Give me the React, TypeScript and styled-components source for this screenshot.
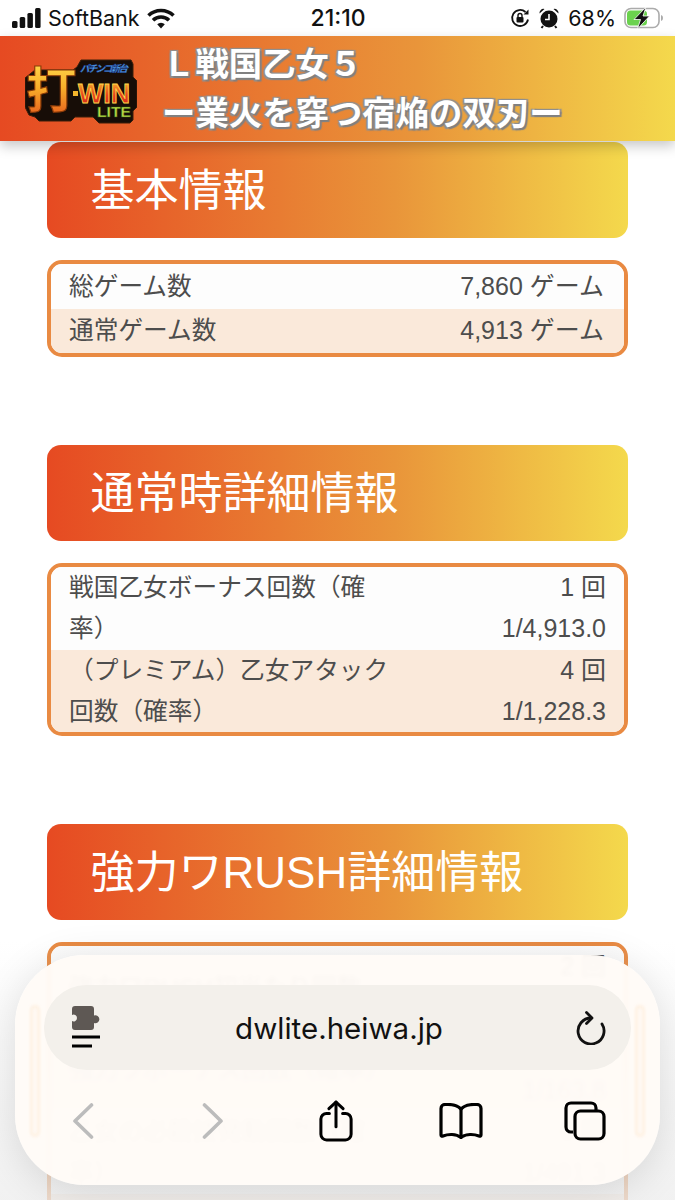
import React from 'react';
import styled, { createGlobalStyle } from 'styled-components';

const GlobalStyle = createGlobalStyle`
  html, body {
    margin: 0;
    padding: 0;
    background: #fff;
  }
  * {
    box-sizing: border-box;
  }
`;

const Page = styled.div`
  position: relative;
  width: 675px;
  height: 1200px;
  overflow: hidden;
  background: #fff;
  font-family: "Liberation Sans", "Noto Sans CJK JP", sans-serif;
`;

const StatusBar = styled.div`
  display: grid;
  grid-template-columns: 1fr auto 1fr;
  align-items: center;
  height: 36px;
  padding: 0 11px 0 12px;
  font-family: Inter, "Liberation Sans", sans-serif;
  font-size: 21.5px;
  color: #111;
`;

const StatusLeft = styled.div`
  display: flex;
  align-items: center;
  gap: 7px;
`;

const StatusRight = styled.div`
  display: flex;
  align-items: center;
  justify-content: flex-end;
  gap: 8px;
`;

const Clock = styled.div`
  font-size: 23px;
  font-weight: 500;
`;

const Header = styled.header`
  position: relative;
  z-index: 2;
  display: flex;
  align-items: center;
  height: 105px;
  padding-left: 25px;
  gap: 25px;
  background: linear-gradient(90deg, #e64a22 0%, #e9953a 62%, #f4d94c 100%);
  box-shadow: 0 5px 12px rgba(0, 0, 0, 0.22);
`;

const HeaderTitle = styled.h1`
  margin: 0;
  font-size: 33.4px;
  line-height: 49px;
  font-weight: 700;
  color: #fff;
  white-space: nowrap;
  text-shadow: 2px 2px 1px #808080, -1.5px -1.5px 1px #909090, 2px -1.5px 1px #909090, -1.5px 2px 1px #909090;
`;

const Content = styled.main`
  padding: 1px 47px 0;
`;

const Section = styled.section`
  margin-bottom: 88px;
`;

const SectionTitle = styled.h2`
  display: flex;
  align-items: center;
  height: 96px;
  margin: 0 0 22px;
  padding: 0 0 7px 43.5px;
  border-radius: 14px;
  font-size: 44px;
  font-weight: 400;
  color: #fff;
  background: linear-gradient(90deg, #e64a22 0%, #e9953a 60%, #f4d94c 100%);
`;

const Table = styled.div`
  border: 4px solid #e98a42;
  border-radius: 15px;
  overflow: hidden;
`;

const Row = styled.div<{ $alt?: boolean }>`
  display: grid;
  grid-template-columns: 325px 1fr;
  align-items: center;
  min-height: 44.5px;
  padding: 0 18px;
  font-size: 24.7px;
  line-height: 41.25px;
  color: #4d4d4d;
  background: ${props => (props.$alt ? '#fae9da' : '#fdfdfd')};
`;

const Value = styled.div<{ $inset?: boolean }>`
  text-align: right;
  font-size: 25px;
  margin-right: ${props => (props.$inset ? '2px' : '0')};
`;

const BottomFog = styled.div`
  position: absolute;
  z-index: 2;
  left: 0;
  right: 0;
  top: 940px;
  bottom: 0;
  background: linear-gradient(180deg, rgba(238, 238, 238, 0) 0%, rgba(238, 238, 238, 0.35) 40%, rgba(238, 238, 238, 0.8) 100%);
`;

const Sheet = styled.div`
  position: absolute;
  z-index: 3;
  left: 15px;
  top: 955px;
  width: 645px;
  height: 230px;
  padding: 30px 29px 0;
  border-radius: 70px;
  background: rgba(255, 251, 247, 0.965);
  box-shadow: 0 6px 40px rgba(0, 0, 0, 0.12);
  backdrop-filter: blur(2px);
`;

const EdgeGlow = styled.div<{ $side: 'left' | 'right' }>`
  position: absolute;
  top: 50px;
  ${props => props.$side}: 15px;
  width: 10px;
  height: 132px;
  border-radius: 6px;
  border: 3px solid rgba(245, 170, 90, 0.14);
  filter: blur(1.5px);
`;

const UrlBar = styled.div`
  display: flex;
  align-items: center;
  justify-content: space-between;
  height: 85px;
  padding: 0 25px 0 28px;
  border-radius: 43px;
  background: #f3f0eb;
`;

const UrlText = styled.div`
  font-family: Inter, "Liberation Sans", sans-serif;
  font-size: 29.5px;
  color: #111;
`;

const Toolbar = styled.div`
  display: grid;
  grid-template-columns: 130px 130px 115px 136px 112px;
  justify-items: center;
  align-items: center;
  height: 102px;
  margin-left: -26px;
`;

const Logo = () => (
  <svg width="112" height="78" viewBox="0 -8 112 78">
    <defs>
      <linearGradient id="gold" x1="0" y1="0" x2="0" y2="1">
        <stop offset="0" stopColor="#ffe75a" />
        <stop offset="0.5" stopColor="#f9b02a" />
        <stop offset="1" stopColor="#e2501b" />
      </linearGradient>
      <linearGradient id="red" x1="0" y1="0" x2="0" y2="1">
        <stop offset="0" stopColor="#f9c52f" />
        <stop offset="0.55" stopColor="#e8401c" />
        <stop offset="1" stopColor="#c9201a" />
      </linearGradient>
    </defs>
    <path
      d="M10 12h38l4-3 4-7h50l2 4v13l4 4v26l-4 4v9l-3 3H74l-6-6H50l-4 4H14l-4-4-6-2-4-8V20z"
      fill="#170d07"
      stroke="#3b1e0a"
      strokeWidth="1"
    />
    <text x="79" y="14" textAnchor="middle" fontSize="9.5" fontWeight="700" fontStyle="italic" fill="#5db2f5" stroke="#1d3f8f" strokeWidth="0.5" fontFamily="'Noto Sans CJK JP', sans-serif" textLength="48">
      パチンコ新台
    </text>
    <text
      transform="translate(1 50) scale(1.15 1.1)"
      fontSize="44"
      fontWeight="700"
      fill="url(#gold)"
      stroke="#8a3a08"
      strokeWidth="1"
      fontFamily="'Noto Sans CJK JP', sans-serif"
    >
      打
    </text>
    <rect x="48" y="33" width="5" height="5" fill="#f4b52c" />
    <text x="53" y="45" fontSize="27" fontWeight="700" fill="url(#red)" stroke="#ffd54a" strokeWidth="0.9" fontFamily="'Liberation Sans', sans-serif" textLength="52" lengthAdjust="spacingAndGlyphs">
      WIN
    </text>
    <text x="72" y="59" fontSize="14.5" fontWeight="700" fill="#c3e04a" stroke="#2b5a12" strokeWidth="0.5" fontFamily="'Liberation Sans', sans-serif" textLength="34" lengthAdjust="spacingAndGlyphs">
      LITE
    </text>
  </svg>
);

const SignalIcon = () => (
  <svg width="29" height="20" viewBox="0 0 29 20" fill="#111">
    <rect x="0" y="13" width="5.500" height="7" rx="1.500" />
    <rect x="7.700" y="9" width="5.500" height="11" rx="1.500" />
    <rect x="15.400" y="5" width="5.500" height="15" rx="1.500" />
    <rect x="23.100" y="0" width="5.500" height="20" rx="1.500" />
  </svg>
);

const WifiIcon = () => (
  <svg width="28" height="21" viewBox="0 0 28 21" fill="none" stroke="#111" strokeWidth="3.6">
    <path d="M1.500 7.500a18 18 0 0 1 25 0" />
    <path d="M6 12.200a11.500 11.500 0 0 1 16 0" />
    <path d="M14 20.500l-3.800-4.200a5.400 5.400 0 0 1 7.600 0z" fill="#111" stroke="none" />
  </svg>
);

const RotationLockIcon = () => (
  <svg width="20" height="20" viewBox="0 0 20 20" fill="none">
    <path d="M18 11.500A8 8 0 1 1 15.500 4" stroke="#111" strokeWidth="1.800" />
    <path d="M18.500 1.500v5h-5z" fill="#111" />
    <rect x="6.500" y="9" width="7" height="5.500" rx="1" fill="#111" />
    <path d="M8 9V7.500a2 2 0 0 1 4 0V9" stroke="#111" strokeWidth="1.400" />
  </svg>
);

const AlarmIcon = () => (
  <svg width="22" height="22" viewBox="0 0 22 22" fill="none">
    <circle cx="11" cy="12" r="8.500" fill="#111" />
    <path d="M1.500 6.500a4 4 0 0 1 5-4.500zM20.500 6.500a4 4 0 0 0-5-4.500z" fill="#111" />
    <path d="M11 7v5.500H7" stroke="#fff" strokeWidth="1.600" />
    <path d="M5 19l-1.500 2M17 19l1.500 2" stroke="#111" strokeWidth="2" />
  </svg>
);

const BatteryIcon = () => (
  <svg width="40" height="22" viewBox="0 0 40 22" fill="none">
    <rect x="1" y="1.500" width="34" height="19" rx="6" stroke="#ababab" strokeWidth="1.600" />
    <rect x="3" y="3.500" width="20" height="15" rx="3.500" fill="#6bd24e" />
    <path d="M37 8v6a3 3 0 0 0 2-3 3 3 0 0 0-2-3z" fill="#ababab" />
    <path d="M22 0L10 12.500h6.500L13.500 22l12-13h-6.500z" fill="#111" stroke="#fff" strokeWidth="0.800" />
  </svg>
);

const PuzzleMenuIcon = () => (
  <svg width="30" height="44" viewBox="0 0 30 44" fill="none">
    <path
      d="M3 0h16a3 3 0 0 1 3 3v6.500a4 4 0 1 1 0 7.500V21a3 3 0 0 1-3 3H3a3 3 0 0 1-3-3v-6a3.400 3.400 0 1 0 0-6V3a3 3 0 0 1 3-3z"
      fill="#5e5854"
    />
    <path d="M0 31h28M0 40h20" stroke="#000" strokeWidth="3.200" />
  </svg>
);

const ReloadIcon = () => (
  <svg width="30" height="34" viewBox="0 0 30 34" fill="none" stroke="#111" strokeWidth="2.800" strokeLinecap="round" strokeLinejoin="round">
    <path d="M15 7a13 13 0 1 0 11 6" />
    <path d="M10.500 1.500L16 7l-5.500 5.500" />
  </svg>
);

const ChevronIcon = ({ dir }: { dir: 'left' | 'right' }) => (
  <svg width="22" height="36" viewBox="0 0 22 36" fill="none" stroke="#bcbcbc" strokeWidth="3.600" strokeLinecap="round" strokeLinejoin="round">
    <path d={dir === 'left' ? 'M19.500 2L3 18l16.500 16' : 'M2.500 2L19 18 2.500 34'} />
  </svg>
);

const ShareIcon = () => (
  <svg width="34" height="42" viewBox="0 0 36 44" fill="none" stroke="#000" strokeWidth="3.200" strokeLinecap="round" strokeLinejoin="round">
    <path d="M11 14H8a6 6 0 0 0-6 6v16a6 6 0 0 0 6 6h20a6 6 0 0 0 6-6V20a6 6 0 0 0-6-6h-3" />
    <path d="M18 28V2" />
    <path d="M10.500 9L18 2l7.500 7" />
  </svg>
);

const BookIcon = () => (
  <svg width="44" height="36" viewBox="0 0 44 36" fill="none" stroke="#000" strokeWidth="3.200" strokeLinecap="round" strokeLinejoin="round">
    <path d="M22 6c-3-3-7-4.500-13-4.500H6a4 4 0 0 0-4 4V32c0 1 .8 1.500 2 1 5-2 13-2.500 18 1.500 5-4 13-3.500 18-1.500 1.200.5 2 0 2-1V5.500a4 4 0 0 0-4-4h-3C29 1.500 25 3 22 6z" />
    <path d="M22 6v28" />
  </svg>
);

const TabsIcon = () => (
  <svg width="42" height="40" viewBox="0 0 42 40" fill="none" stroke="#000" strokeWidth="3.200" strokeLinejoin="round">
    <path d="M9 31H7a5 5 0 0 1-5-5V7a5 5 0 0 1 5-5h20a5 5 0 0 1 5 5v2" />
    <rect x="11" y="10" width="29" height="28" rx="5.500" />
  </svg>
);

const sections = [
  {
    title: '基本情報',
    inset: true,
    rows: [
      { label: '総ゲーム数', value: ['7,860 ゲーム'] },
      { label: '通常ゲーム数', value: ['4,913 ゲーム'] },
    ],
  },
  {
    title: '通常時詳細情報',
    rows: [
      { label: '戦国乙女ボーナス回数（確率）', value: ['1 回', '1/4,913.0'] },
      { label: '（プレミアム）乙女アタック回数（確率）', value: ['4 回', '1/1,228.3'] },
    ],
  },
  {
    title: '強力ワRUSH詳細情報',
    rows: [
      { label: '強力ワRUSH初当たり回数', value: ['2 回', '1/2,456.5'] },
      { label: '強力ワボーナス回数（確率）', value: ['18 回', '1/163.8'] },
      { label: '乙女の必殺技発動回数（確率）', value: ['6 回', '1/491.3'] },
      // the next row is cropped by the bottom of the page
      { label: '', value: [] },
    ],
  },
];

export default function App() {
  return (
    <Page>
      <GlobalStyle />
      <StatusBar>
        <StatusLeft>
          <SignalIcon />
          <span>SoftBank</span>
          <WifiIcon />
        </StatusLeft>
        <Clock>21:10</Clock>
        <StatusRight>
          <RotationLockIcon />
          <AlarmIcon />
          <span>68%</span>
          <BatteryIcon />
        </StatusRight>
      </StatusBar>
      <Header>
        <Logo />
        <HeaderTitle>
          Ｌ戦国乙女５
          <br />
          ー業火を穿つ宿焔の双刃ー
        </HeaderTitle>
      </Header>
      <Content>
        {sections.map(section => (
          <Section key={section.title}>
            <SectionTitle>{section.title}</SectionTitle>
            <Table>
              {section.rows.map((row, i) => (
                <Row key={row.label} $alt={i % 2 === 1}>
                  <div>{row.label}</div>
                  <Value $inset={section.inset}>
                    {row.value.map(line => (
                      <div key={line}>{line}</div>
                    ))}
                  </Value>
                </Row>
              ))}
            </Table>
          </Section>
        ))}
      </Content>
      <BottomFog />
      <Sheet>
        <EdgeGlow $side="left" />
        <EdgeGlow $side="right" />
        <UrlBar>
          <PuzzleMenuIcon />
          <UrlText>dwlite.heiwa.jp</UrlText>
          <ReloadIcon />
        </UrlBar>
        <Toolbar>
          <ChevronIcon dir="left" />
          <ChevronIcon dir="right" />
          <ShareIcon />
          <BookIcon />
          <TabsIcon />
        </Toolbar>
      </Sheet>
    </Page>
  );
}
